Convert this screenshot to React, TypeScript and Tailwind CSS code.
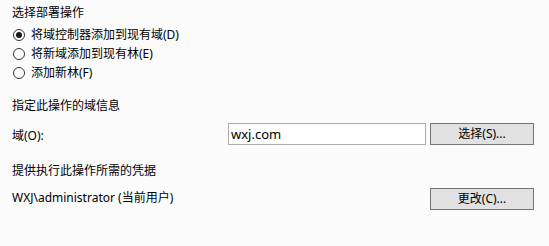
import React from "react";

const font = { fontFamily: '"Noto Sans", "Noto Sans CJK SC", sans-serif' };

function Radio({ checked, label }: { checked?: boolean; label: string }) {
  return (
    <div className="flex h-[19px] items-center">
      <span className="ml-[1px] flex h-[12px] w-[12px] items-center justify-center rounded-full border border-[#333333] bg-white">
        {checked && <span className="h-[6px] w-[6px] rounded-full bg-[#1a1a1a]" />}
      </span>
      <span className="ml-[6px]">{label}</span>
    </div>
  );
}

export default function App() {
  return (
    <div
      className="h-[246px] w-[549px] overflow-hidden bg-[#fbfbfb] pl-3 pt-[4px] text-[12px] leading-[18px] text-[#000000]"
      style={font}
    >
      <div>选择部署操作</div>
      <div className="mt-[3px] flex flex-col">
        <Radio checked label="将域控制器添加到现有域(D)" />
        <Radio label="将新域添加到现有林(E)" />
        <Radio label="添加新林(F)" />
      </div>
      <div className="mt-[15px]">指定此操作的域信息</div>
      <div className="mt-[8px] flex h-[22px] items-center">
        <span className="w-[216px] pt-[4px]">域(O):</span>
        <div className="flex h-[22px] w-[198px] items-center border border-[#acacac] bg-white pl-[2px] text-[13px]">
          wxj.com
        </div>
        <div className="ml-[4px] flex h-[22px] w-[104px] items-center justify-center border border-[#767676] bg-[#e1e1e1]">
          选择(S)...
        </div>
      </div>
      <div className="mt-[17px]">提供执行此操作所需的凭据</div>
      <div className="mt-[8px] flex h-[22px] items-center">
        <span className="w-[418px] -mt-[3px]">WXJ\administrator (当前用户)</span>
        <div className="flex h-[22px] w-[104px] items-center justify-center border border-[#767676] bg-[#e1e1e1]">
          更改(C)...
        </div>
      </div>
    </div>
  );
}
